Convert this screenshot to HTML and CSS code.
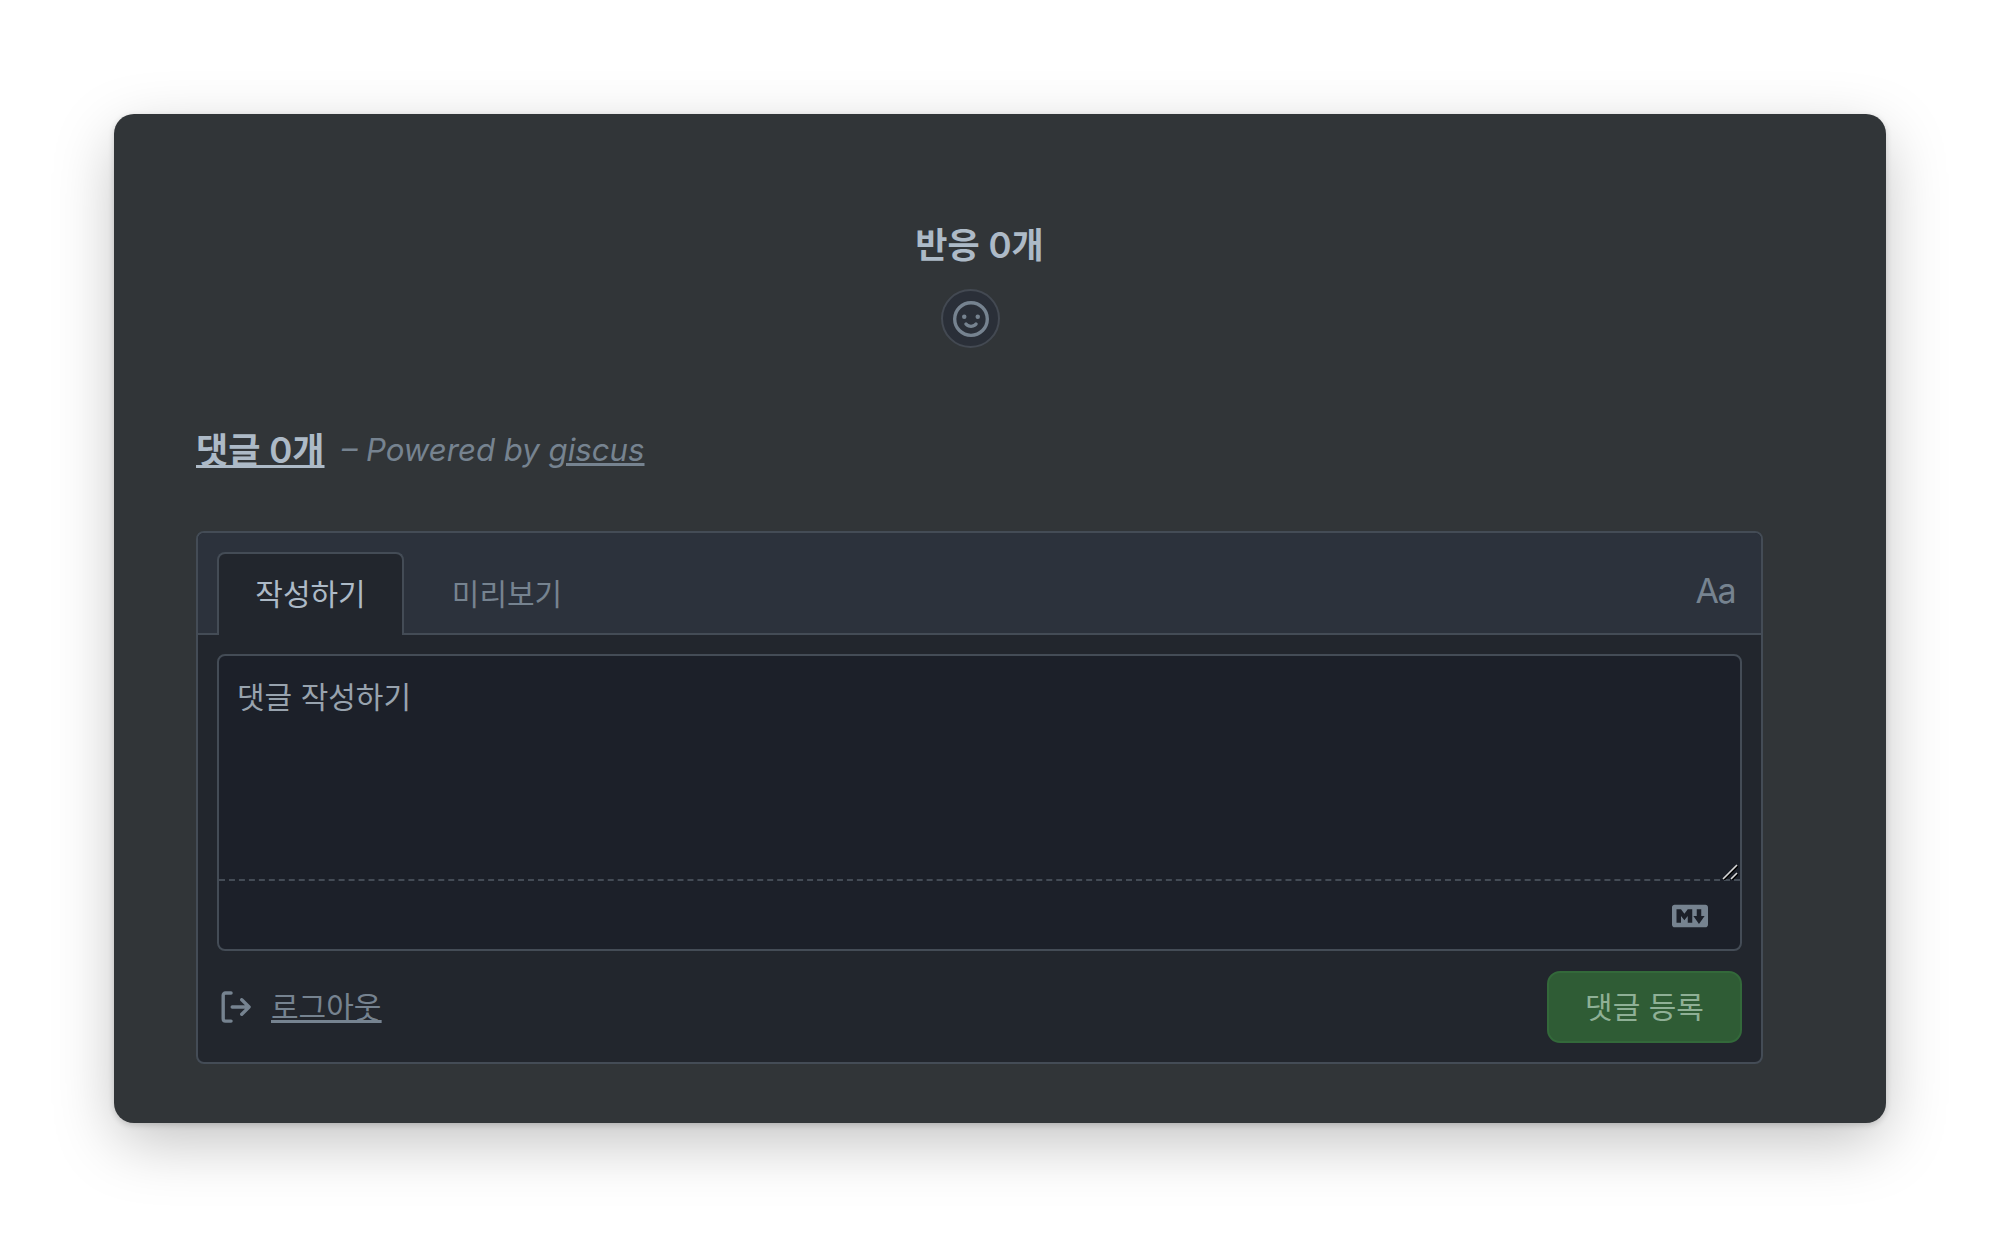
FILE: index.html
```html
<!DOCTYPE html>
<html lang="ko">
<head>
<meta charset="utf-8">
<title>giscus</title>
<link rel="stylesheet" href="styles.css">
</head>
<body>
<main class="window">
  <section class="reactions">
    <h4 class="reactions-title">반응 0개</h4>
    <div class="reactions-row">
      <button class="smile-btn" type="button" aria-label="반응 추가">
        <svg class="smile-icon" viewBox="0 0 16 16" fill="currentColor"><path d="M8 0a8 8 0 1 1 0 16A8 8 0 0 1 8 0ZM1.5 8a6.5 6.5 0 1 0 13 0 6.5 6.5 0 0 0-13 0Zm3.82 1.636a.75.75 0 0 1 1.038.175l.007.009c.103.118.22.222.35.31.264.178.683.37 1.285.37.602 0 1.02-.192 1.285-.371.13-.088.247-.192.35-.31l.007-.008a.75.75 0 0 1 1.222.87l-.022-.015c.02.013.021.015.021.015v.001l-.001.002-.002.003-.005.007-.014.019a2.066 2.066 0 0 1-.184.213c-.16.166-.338.316-.53.445-.63.418-1.37.638-2.127.629-.946 0-1.652-.308-2.126-.63a3.331 3.331 0 0 1-.715-.657l-.014-.02-.005-.006-.002-.003v-.002h-.001l.613-.432-.614.43a.75.75 0 0 1 .183-1.044ZM12 7a1 1 0 1 1-2 0 1 1 0 0 1 2 0ZM5 8a1 1 0 1 1 0-2 1 1 0 0 1 0 2Zm5.25 2.25.592.416a97.71 97.71 0 0 0-.592-.416Z"/></svg>
      </button>
    </div>
  </section>
  <h4 class="count-line"><a class="count-link" href="#">댓글 0개</a><em class="powered">– Powered by <a class="powered-link" href="#">giscus</a></em></h4>
  <form class="box">
    <div class="tabs">
      <div class="tab-list">
        <button class="tab tab-active" type="button">작성하기</button>
        <button class="tab" type="button">미리보기</button>
      </div>
      <span class="aa">Aa</span>
    </div>
    <div class="box-body">
      <div class="editor">
        <textarea class="input" placeholder="댓글 작성하기"></textarea>
        <svg class="grip" viewBox="0 0 16 16" fill="none" stroke-width="1.6">
          <path d="M1 15 15 1M9 15l6-6" stroke="#000" transform="translate(1 1)"/>
          <path d="M1 15 15 1M9 15l6-6" stroke="#d8d8d8"/>
        </svg>
        <div class="editor-foot">
          <svg class="md-icon" viewBox="0 0 16 16" fill="currentColor"><path d="M14.85 3c.63 0 1.15.52 1.14 1.15v7.7c0 .63-.51 1.15-1.15 1.15H1.15C.52 13 0 12.48 0 11.84V4.15C0 3.52.52 3 1.15 3ZM9 11V5H7L5.5 7 4 5H2v6h2V8l1.5 1.92L7 8v3Zm2.99.5L14.5 8H13V5h-2v3H9.5Z"/></svg>
        </div>
      </div>
      <div class="actions">
        <a class="logout" href="#">
          <svg class="out-icon" viewBox="0 0 16 16" fill="currentColor"><path d="M2 2.75C2 1.784 2.784 1 3.75 1h2.5a.75.75 0 0 1 0 1.5h-2.5a.25.25 0 0 0-.25.25v10.5c0 .138.112.25.25.25h2.5a.75.75 0 0 1 0 1.5h-2.5A1.75 1.75 0 0 1 2 13.25Zm10.44 4.5-1.97-1.97a.749.749 0 0 1 .326-1.275.749.749 0 0 1 .734.215l3.25 3.25a.75.75 0 0 1 0 1.06l-3.25 3.25a.749.749 0 0 1-1.275-.326.749.749 0 0 1 .215-.734l1.97-1.97H6.75a.75.75 0 0 1 0-1.5Z"/></svg>
          <span class="logout-text">로그아웃</span>
        </a>
        <button class="submit" type="button">댓글 등록</button>
      </div>
    </div>
  </form>
</main>
</body>
</html>
```
FILE: styles.css
```css
* { box-sizing: border-box; }
html, body { margin: 0; height: 100%; }
body {
  background: #fff;
  padding: 114px;
  font-family: Inter, "Noto Sans CJK KR", sans-serif;
  overflow: hidden;
}
.window {
  height: 1009px;
  background: #313538;
  border-radius: 20px;
  box-shadow: 0 20px 64px -4px rgba(0, 0, 0, .26), 0 2px 6px rgba(0, 0, 0, .16);
  padding: 0 123px 60px 82px;
}
.reactions { padding-top: 107px; text-align: center; }
.reactions-title {
  margin: 0;
  font-size: 35px;
  line-height: 48px;
  font-weight: 600;
  color: #adbac7;
}
.reactions-row { display: flex; justify-content: center; padding-right: 18px; margin-top: 20px; }
.smile-btn {
  width: 59px; height: 59px;
  display: flex; align-items: center; justify-content: center;
  border-radius: 50%;
  border: 2px solid #434952;
  background: #2a2f38;
  color: #768390;
  padding: 0;
}
.smile-icon { width: 36px; height: 36px; }
.count-line {
  margin: 78px 0 0;
  font-size: 35px;
  line-height: 48px;
  font-weight: 600;
  display: flex;
  align-items: center;
}
.count-link { color: #adbac7; text-decoration: underline; }
.powered {
  margin-left: 17px;
  font-weight: 400;
  font-size: 31.2px;
  color: #768390;
}
.powered-link { color: #768390; text-decoration: underline; }
.box {
  margin-top: 57px;
  height: 533px;
  border: 2px solid #444c56;
  border-radius: 8px;
  background: #22262d;
  overflow: hidden;
}
.tabs {
  height: 102px;
  background: #2c323c;
  border-bottom: 2px solid #444c56;
  display: flex;
  justify-content: space-between;
  padding: 19px 26px 0 19px;
}
.tab-list { display: flex; }
.tab {
  width: 187px;
  height: 83px;
  border: 2px solid transparent;
  border-bottom: 0;
  border-radius: 8px 8px 0 0;
  background: transparent;
  font: 400 30px/40px Inter, "Noto Sans CJK KR", sans-serif;
  color: #768390;
  padding: 0 0 2px;
}
.tab-active {
  background: #22262d;
  border-color: #444c56;
  color: #adbac7;
}
.tab:not(.tab-active) { margin-left: 20px; width: 166px; }
.aa {
  font-size: 34px;
  line-height: 40px;
  letter-spacing: -1.5px;
  margin-top: 19px;
  color: #768390;
}
.box-body { padding: 19px 19px 0; }
.editor {
  position: relative;
  height: 297px;
  border: 2px solid #444c56;
  border-radius: 8px;
  background: #1c2029;
  overflow: hidden;
}
.input {
  display: block;
  width: 100%;
  height: 225px;
  padding: 21px 18px;
  border: 0;
  border-bottom: 2px dashed #444c56;
  outline: 0;
  background: transparent;
  color: #adbac7;
  font: 400 30px/40px Inter, "Noto Sans CJK KR", sans-serif;
  resize: none;
}
.input::placeholder { color: #98a3ae; opacity: 1; }
.grip {
  position: absolute;
  right: 2px;
  top: 208px;
  width: 16px;
  height: 16px;
}
.editor-foot {
  height: 68px;
  display: flex;
  justify-content: flex-end;
  align-items: flex-start;
  padding: 17px 32px 0 0;
}
.md-icon { width: 36px; height: 36px; color: #768390; }
.actions {
  margin-top: 20px;
  display: flex;
  justify-content: space-between;
  align-items: center;
}
.logout { display: flex; align-items: center; color: #768390; }
.out-icon { width: 36px; height: 36px; margin-right: 18px; }
.logout-text { font-size: 30px; line-height: 40px; text-decoration: underline; }
.submit {
  width: 195px;
  height: 72px;
  border: 2px solid #33693a;
  border-radius: 13px;
  background: #2f5c35;
  color: #8fb096;
  font: 400 30px/40px Inter, "Noto Sans CJK KR", sans-serif;
  padding: 0;
}
```
